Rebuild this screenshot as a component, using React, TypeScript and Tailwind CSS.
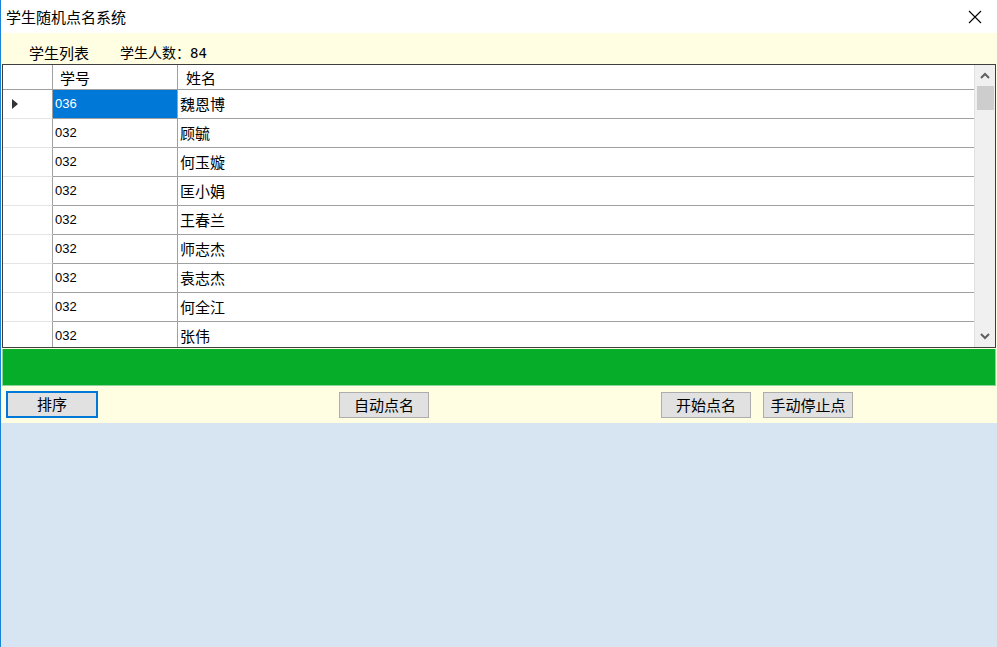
import React from "react";

const rows: [string, string][] = [
  ["036", "魏恩博"],
  ["032", "顾毓"],
  ["032", "何玉嫙"],
  ["032", "匡小娟"],
  ["032", "王春兰"],
  ["032", "师志杰"],
  ["032", "袁志杰"],
  ["032", "何全江"],
  ["032", "张伟"],
];

const cjk = { fontFamily: '"Noto Sans CJK SC", "Microsoft YaHei", sans-serif' };
const sans = { fontFamily: '"Liberation Sans", Arial, sans-serif' };

function Btn({ label, focused, w = 90 }: { label: string; focused?: boolean; w?: number }) {
  return (
    <div
      className={
        focused
          ? "h-[27px] flex items-center justify-center bg-[#e1e1e1] border-2 border-[#0078d7] text-[15px] text-black"
          : "h-[26px] flex items-center justify-center bg-[#e1e1e1] border border-[#adadad] text-[15px] text-black"
      }
      style={{ ...cjk, width: w }}
    >
      {label}
    </div>
  );
}

export default function App() {
  return (
    <div className="w-[997px] h-[647px] overflow-hidden flex flex-col bg-white border-l border-[#1883d7]" style={cjk}>
      {/* title bar */}
      <div className="h-[33px] shrink-0 flex items-center justify-between bg-white">
        <span className="ml-[5px] text-[15px] text-black leading-none">学生随机点名系统</span>
        <svg width="14" height="14" viewBox="0 0 14 14" className="mr-[15px]">
          <path d="M1 1 L13 13 M13 1 L1 13" stroke="#000" strokeWidth="1.1" />
        </svg>
      </div>
      {/* yellow header panel */}
      <div className="h-[31px] shrink-0 bg-[#fffee3] flex items-end pb-[4px] text-black">
        <span className="ml-[28px] text-[15px] leading-none">学生列表</span>
        <span className="ml-[31px] text-[14px] leading-none">
          学生人数：
          <span style={{ fontFamily: '"DejaVu Sans Mono", monospace' }} className="text-[14px]">84</span>
        </span>
      </div>
      {/* grid area */}
      <div className="shrink-0 bg-[#fffee3] pl-[1px] pr-[1px]">
        <div className="h-[284px] border border-[#3f3f3f] bg-white flex overflow-hidden">
          <div className="flex-1 flex flex-col overflow-hidden">
            {/* header */}
            <div className="h-[25px] shrink-0 flex border-b border-[#a0a0a0]">
              <div className="w-[50px] shrink-0 border-r border-[#a0a0a0]" />
              <div className="w-[125px] shrink-0 border-r border-[#a0a0a0] flex items-center pl-[7px] text-[15px] leading-none">学号</div>
              <div className="flex-1 flex items-center pl-[8px] text-[15px] leading-none">姓名</div>
            </div>
            {rows.map(([id, name], i) => (
              <div key={i} className="h-[29px] shrink-0 flex">
                <div className="w-[50px] shrink-0 border-r border-b border-r-[#a0a0a0] border-b-[#e4e4e4] flex items-center pl-[8px]">
                  {i === 0 && (
                    <svg width="8" height="12" viewBox="0 0 8 12">
                      <path d="M1 1 L7 6 L1 11 Z" fill="#333" />
                    </svg>
                  )}
                </div>
                <div
                  className={
                    i === 0
                      ? "w-[125px] shrink-0 border-r border-b border-[#a0a0a0] bg-[#0078d7] text-white flex items-center pl-[2px] text-[13px]"
                      : "w-[125px] shrink-0 border-r border-b border-[#a0a0a0] text-black flex items-center pl-[2px] text-[13px]"
                  }
                  style={sans}
                >
                  {id}
                </div>
                <div className="flex-1 border-b border-[#a0a0a0] flex items-center pl-[2px] text-[15px] text-black">{name}</div>
              </div>
            ))}
          </div>
          {/* scrollbar */}
          <div className="w-[21px] shrink-0 bg-[#f0f0f0] border-l border-[#e0e0e0] flex flex-col items-center">
            <div className="h-[21px] w-full flex items-center justify-center">
              <svg width="10" height="7" viewBox="0 0 10 7">
                <path d="M1 6 L5 2 L9 6" stroke="#606060" strokeWidth="2" fill="none" />
              </svg>
            </div>
            <div className="w-[17px] h-[24px] bg-[#cdcdcd]" />
            <div className="flex-1" />
            <div className="h-[21px] w-full flex items-center justify-center">
              <svg width="10" height="7" viewBox="0 0 10 7">
                <path d="M1 1 L5 5 L9 1" stroke="#606060" strokeWidth="2" fill="none" />
              </svg>
            </div>
          </div>
        </div>
        {/* green bar */}
        <div className="h-[37px] mt-[1px] bg-[#05ad28] border border-[#8fd39c] border-t-0" />
      </div>
      {/* button strip */}
      <div className="h-[37px] shrink-0 bg-[#fffee3] flex items-start pt-[5px]">
        <div className="ml-[5px]">
          <Btn label="排序" focused w={92} />
        </div>
        <div className="ml-[241px] mt-[1px]">
          <Btn label="自动点名" />
        </div>
        <div className="ml-[232px] mt-[1px]">
          <Btn label="开始点名" />
        </div>
        <div className="ml-[12px] mt-[1px]">
          <Btn label="手动停止点" />
        </div>
      </div>
      {/* blue area */}
      <div className="flex-1 bg-[#d7e4f1]" />
    </div>
  );
}
